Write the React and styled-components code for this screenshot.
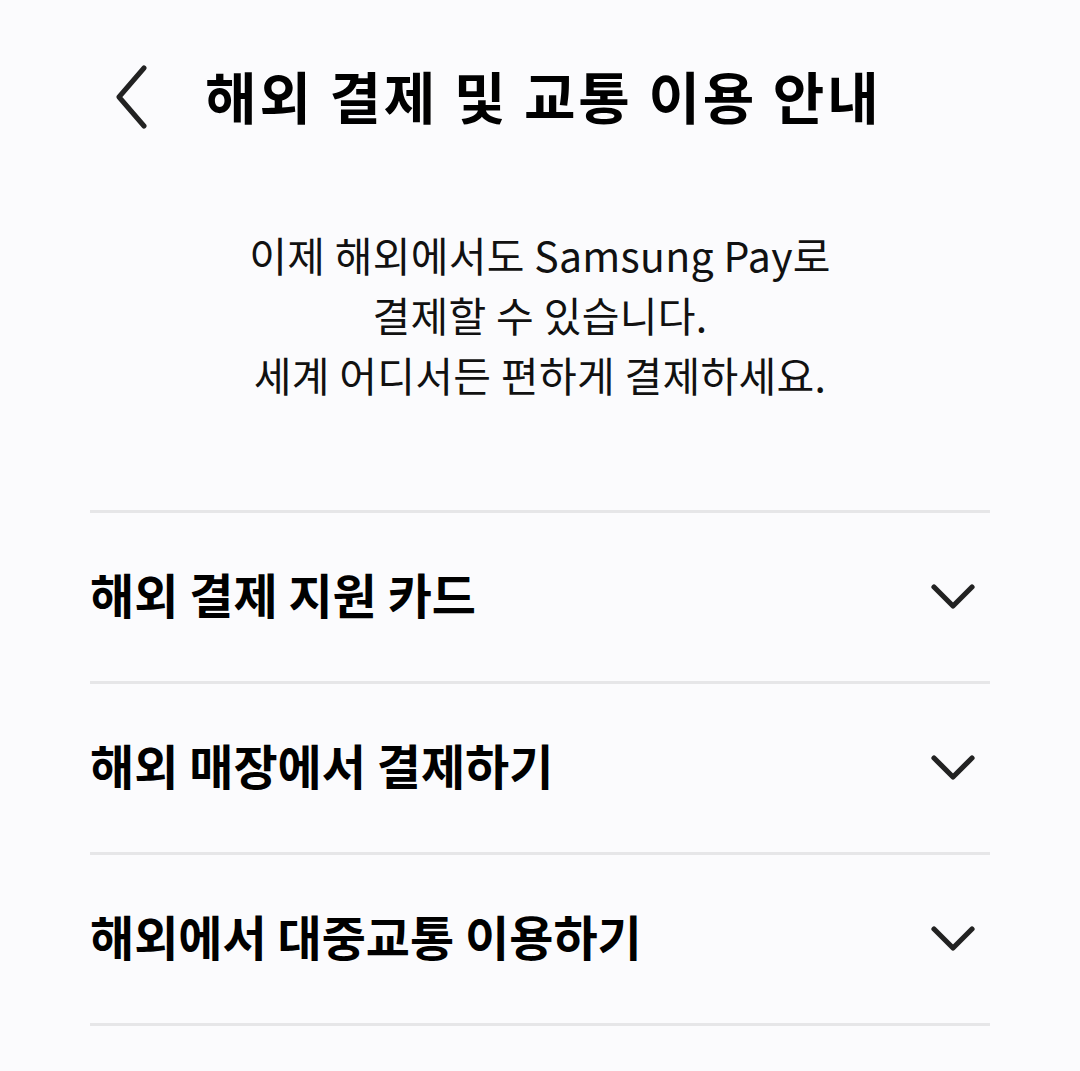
import * as React from 'react';
import styled, { createGlobalStyle } from 'styled-components';

const GlobalStyle = createGlobalStyle`
  html, body {
    margin: 0;
    padding: 0;
    background: #fbfbfd;
  }
  body {
    font-family: "Noto Sans CJK KR", "Noto Sans", sans-serif;
    color: #000;
  }
`;

const Page = styled.div`
  width: 1080px;
  min-height: 1071px;
  background: #fbfbfd;
`;

const Header = styled.header`
  display: flex;
  align-items: flex-start;
  height: 224px;
  padding: 62px 0 0 106px;
  box-sizing: border-box;
`;

const BackButton = styled.button`
  width: 48px;
  height: 70px;
  padding: 0;
  border: none;
  background: none;
  display: flex;
  align-items: center;
  justify-content: center;
  margin-right: 51px;
`;

const Title = styled.h1`
  margin: 0;
  font-size: 56px;
  font-weight: 700;
  line-height: 66px;
  letter-spacing: 2.9px;
`;

const Intro = styled.p`
  margin: 0;
  text-align: center;
  font-size: 41px;
  line-height: 60px;
  font-weight: 400;
  letter-spacing: 0.3px;
  color: #111;
`;

const List = styled.ul`
  list-style: none;
  margin: 106px 90px 0;
  padding: 0;
  border-top: 3px solid #e6e6e8;
`;

const Row = styled.li`
  display: flex;
  align-items: center;
  justify-content: space-between;
  height: 168px;
  border-bottom: 3px solid #e6e6e8;
`;

const RowTitle = styled.span`
  font-size: 48px;
  font-weight: 700;
  margin-bottom: 8px;
`;

const Chevron = styled.svg`
  margin-right: 15px;
`;

const sections = ['해외 결제 지원 카드', '해외 매장에서 결제하기', '해외에서 대중교통 이용하기'];

const App = () => (
  <Page>
    <GlobalStyle />
    <Header>
      <BackButton aria-label="뒤로">
        <svg width="40" height="64" viewBox="0 0 40 64">
          <path d="M34 3 L9 32 L34 61" fill="none" stroke="#222" strokeWidth="5" strokeLinecap="round" strokeLinejoin="round" />
        </svg>
      </BackButton>
      <Title>해외 결제 및 교통 이용 안내</Title>
    </Header>
    <Intro>
      이제 해외에서도 Samsung Pay로<br />
      결제할 수 있습니다.<br />
      세계 어디서든 편하게 결제하세요.
    </Intro>
    <List>
      {sections.map((s) => (
        <Row key={s}>
          <RowTitle>{s}</RowTitle>
          <Chevron width="44" height="28" viewBox="0 0 44 28">
            <path d="M3 4 L22 23 L41 4" fill="none" stroke="#222" strokeWidth="5.2" strokeLinecap="round" strokeLinejoin="round" />
          </Chevron>
        </Row>
      ))}
    </List>
  </Page>
);

export default App;
